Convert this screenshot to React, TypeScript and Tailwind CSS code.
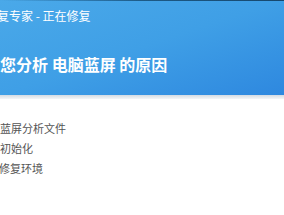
export default function App() {
  const steps = ["加载蓝屏分析文件", "正在初始化", "正在修复环境"];

  return (
    <div
      className="w-[284px] h-[215px] overflow-hidden bg-white"
      style={{ fontFamily: '"Noto Sans CJK SC", "Noto Sans", sans-serif' }}
    >
      <div className="h-[95px] bg-gradient-to-br from-[#4aa9e9] via-[#3f9fe6] to-[#2e88df] flex flex-col">
        <div className="h-px bg-gradient-to-r from-transparent via-[#1d5a86] to-[#16476d]" />
        <div className="h-[22px] mt-[4px] flex items-center whitespace-nowrap text-white text-[12px] ml-[-39px]">
          蓝屏修复专家 - 正在修复
        </div>
        <div className="mt-[26px] h-[22px] flex items-center whitespace-nowrap text-white text-[16px] font-bold ml-[-48px]">
          正在为您分析 电脑蓝屏 的原因
        </div>
      </div>
      <div className="h-[4px] bg-gradient-to-b from-[#d3dbe3] to-[#f4f6f8]" />
      <div className="pt-[21px] flex flex-col gap-[4px] text-[11px] text-[#555] whitespace-nowrap">
        <div className="h-[16px] flex items-center ml-[-22px]">{steps[0]}</div>
        <div className="h-[16px] flex items-center ml-[-22px]">{steps[1]}</div>
        <div className="h-[16px] flex items-center ml-[-23px]">{steps[2]}</div>
      </div>
    </div>
  );
}
